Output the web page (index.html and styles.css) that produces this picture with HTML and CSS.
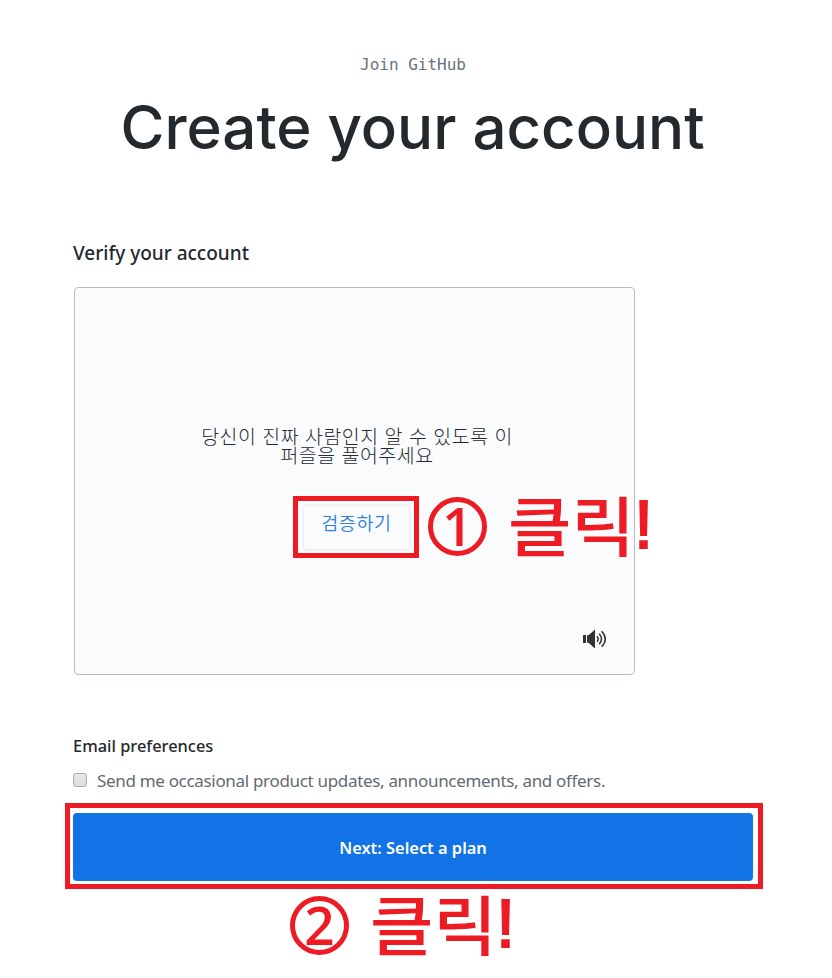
FILE: index.html
```html
<!DOCTYPE html>
<html lang="en">
<head>
<meta charset="utf-8">
<title>Create your account</title>
<link rel="stylesheet" href="styles.css">
</head>
<body>
<main class="page">
  <header class="intro">
    <p class="eyebrow">Join GitHub</p>
    <h1 class="title">Create your account</h1>
  </header>
  <section class="verify">
    <h2 class="verify-heading">Verify your account</h2>
    <div class="captcha">
      <p class="captcha-text" lang="ko">당신이 진짜 사람인지 알 수 있도록 이<br>퍼즐을 풀어주세요</p>
      <div class="captcha-action">
        <button class="captcha-button" type="button" lang="ko">검증하기</button>
        <div class="marker marker-verify"></div>
        <div class="note note-verify" lang="ko"><span class="num">1</span><span class="word">클릭</span><span class="bang">!</span></div>
      </div>
      <svg class="sound" viewBox="0 0 24 20" width="24" height="20" aria-hidden="true">
        <path class="solid" d="M0 6h3v8H0zM4 6.200h1.500L12 0.500v19L5.500 13.800H4z"/>
        <path class="wave" d="M14 7.200q2.400 2.800 0 5.600M16.200 4.800q4.600 5.200 0 10.400M18.600 2.200q7.400 7.800 0 15.600"/>
      </svg>
    </div>
  </section>
  <section class="email">
    <h2 class="email-heading">Email preferences</h2>
    <label class="option"><input class="check" type="checkbox"><span class="option-text">Send me occasional product updates, announcements, and offers.</span></label>
  </section>
  <div class="submit">
    <button class="next" type="button"><span class="next-text">Next: Select a plan</span></button>
    <div class="marker marker-next"></div>
    <div class="note note-next" lang="ko"><span class="num">2</span><span class="word">클릭</span><span class="bang">!</span></div>
  </div>
</main>
</body>
</html>
```
FILE: styles.css
```css
* { box-sizing: border-box; margin: 0; padding: 0; }
body {
  min-height: 978px;
  background: #fff;
  color: #24292e;
  font-family: "Noto Sans", "Noto Sans CJK KR", sans-serif;
}
.page { width: 680px; margin-left: 73px; padding-top: 53px; }
.intro { text-align: center; white-space: nowrap; }
.eyebrow {
  font: 16px/24px "DejaVu Sans Mono", monospace;
  color: #6a737d;
}
.title {
  margin: 14px 1px 0 0;
  font: 500 60px/72px Inter, sans-serif;
}
.verify { margin-top: 75px; }
.verify-heading { font-size: 19px; line-height: 30px; font-weight: 500; }
.captcha {
  position: relative;
  width: 561px;
  height: 388px;
  margin: 19px 0 0 1px;
  padding-top: 138px;
  border: 1px solid #b9bbbe;
  border-radius: 4px;
  background: #fafbfd;
}
.captcha-text {
  width: 564px;
  font: 300 19.400px/19px "Noto Sans CJK KR", sans-serif;
  letter-spacing: 0.550px;
  text-align: center;
  color: #24292e;
}
.captcha-action { position: relative; width: 107px; margin: 41px 0 0 228px; }
.captcha-button {
  display: block;
  width: 107px;
  height: 45px;
  padding-bottom: 12px;
  border: 1px solid #eeeff2;
  border-radius: 4px;
  background: #fafbfd;
  box-shadow: 0 0 1px 1px #f1f2f4;
  color: #2e82de;
  font: 350 18.500px/24px "Noto Sans CJK KR", sans-serif;
  letter-spacing: 0.6px;
}
.marker { position: absolute; border: 5px solid #ed1c24; }
.marker-verify { left: -10px; top: -9px; width: 126px; height: 62px; }
.marker-next { left: -8px; top: -10px; width: 698px; height: 86px; }
.note {
  position: absolute;
  display: flex;
  color: #ed1c24;
  font: 500 65px/62px "Noto Sans CJK KR", sans-serif;
  white-space: nowrap;
}
.num {
  width: 59px;
  height: 59px;
  margin: 5px 21px 0 3px;
  border: 5px solid #ed1c24;
  border-radius: 50%;
  font: 600 53px/47px "Open Sans", sans-serif;
  text-align: center;
}
.word { width: 126px; transform: scaleX(1.06); transform-origin: left; }
.bang { font: 69px/66px "Liberation Sans", sans-serif; -webkit-text-stroke: 2px #ed1c24; }
.note-verify { left: 122px; top: -13px; }
.note-next { left: 214px; top: 78px; }
.sound { position: absolute; left: 508px; top: 341px; }
.solid { fill: #333; }
.wave { fill: none; stroke: #333; stroke-width: 1.5; }
.email { margin-top: 57px; }
.email-heading { font-size: 16.400px; line-height: 28px; font-weight: 500; }
.option { display: flex; align-items: center; height: 26px; margin-top: 7px; white-space: nowrap; }
.check {
  appearance: none;
  width: 14px;
  height: 14px;
  margin-right: 10px;
  border: 1px solid #adadad;
  border-radius: 3px;
  background: linear-gradient(#e8e8e8, #dcdcdc);
}
.option-text { font-size: 17px; font-weight: 400; letter-spacing: -0.320px; color: #626a72; }
.submit { position: relative; margin-top: 20px; }
.next {
  display: block;
  width: 680px;
  height: 68px;
  padding-top: 1px;
  border: 0;
  border-radius: 4px;
  background: #1173e6;
  color: #fff;
  font: 600 16.400px/24px "Noto Sans", sans-serif;
}
```
